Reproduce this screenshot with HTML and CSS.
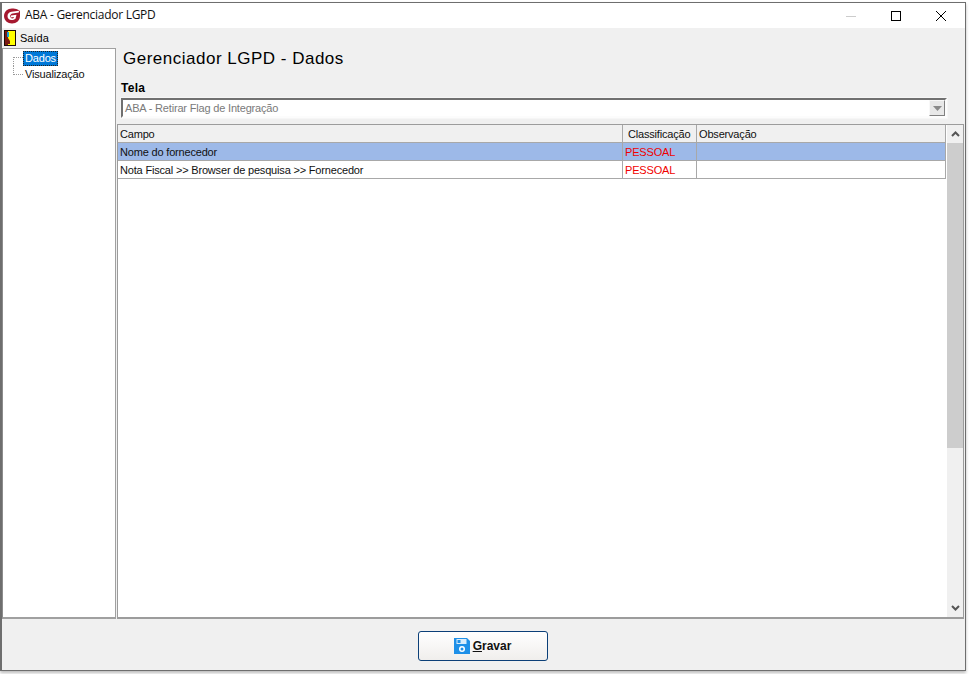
FILE: index.html
```html
<!DOCTYPE html>
<html lang="pt">
<head>
<meta charset="utf-8">
<title>ABA - Gerenciador LGPD</title>
<link rel="stylesheet" href="styles.css">
</head>
<body>
<div class="window">
  <header class="titlebar">
    <svg class="logo" width="16" height="16" viewBox="0 0 16 16"><path d="M8 .5C12 .5 16 2 16 3.500V8c0 4.500-3.500 7.500-8 7.500S0 12.500 0 8 3.500.5 8 .5z" fill="#a5182f"/><path d="M15 2.800L7.500 3.800C5 4.200 3.500 6 3.500 8.200c0 2.300 1.700 3.800 4 3.800 1.500 0 3-.5 4-1.300L12.500 6.800 7 7.600 6.600 9.400l3.300-.3-.3 1c-1.500.7-3.500.2-3.500-1.800 0-1.600 1.100-2.500 2.500-2.800L14.800 4.600z" fill="#fff"/></svg>
    <span class="title">ABA - Gerenciador LGPD</span>
    <div class="controls">
      <span class="ctl"><svg width="16" height="10" viewBox="0 0 16 10"><path d="M3 5.500h10" stroke="#ccc"/></svg></span>
      <span class="ctl"><svg width="16" height="10" viewBox="0 0 16 10"><rect x="3.500" y="0.500" width="9" height="9" fill="none" stroke="#000"/></svg></span>
      <span class="ctl"><svg width="16" height="10" viewBox="0 0 16 10"><path d="M3 0l10 10M13 0L3 10" stroke="#000"/></svg></span>
    </div>
  </header>
  <nav class="menubar">
    <svg width="12" height="16" viewBox="0 0 12 16"><rect width="12" height="16" fill="#1c0b08"/><rect x="1" y="1" width="3" height="14" fill="#7a1a12"/><rect x="4" y="1" width="7" height="14" fill="#ffff00"/><rect x="3" y="2" width="2" height="5" fill="#12a0d8"/><path d="M4 14V8l2 3v3z" fill="#7a1a12"/></svg>
    <span>Saída</span>
  </nav>
  <div class="body">
    <aside class="tree">
      <div class="node"><span class="branch first"></span><span class="selected">Dados</span></div>
      <div class="node"><span class="branch last"></span><span class="leaf">Visualização</span></div>
    </aside>
    <main class="main">
      <h1>Gerenciador LGPD - Dados</h1>
      <div class="field">
        <label>Tela</label>
        <div class="combo">
          <span>ABA - Retirar Flag de Integração</span>
          <span class="combo-btn"><svg width="9" height="5" viewBox="0 0 9 5"><path d="M0 0h9L4.500 5z" fill="#8a8a8a"/></svg></span>
        </div>
      </div>
      <div class="grid">
        <div class="table">
          <div class="row head"><div class="c1">Campo</div><div class="c2 center">Classificação</div><div class="c3">Observação</div></div>
          <div class="row sel"><div class="c1">Nome do fornecedor</div><div class="c2 red">PESSOAL</div><div class="c3"></div></div>
          <div class="row"><div class="c1">Nota Fiscal &gt;&gt; Browser de pesquisa &gt;&gt; Fornecedor</div><div class="c2 red">PESSOAL</div><div class="c3"></div></div>
        </div>
        <div class="scrollbar">
          <span class="arrow"><svg width="9" height="6" viewBox="0 0 9 6"><path d="M1 5l3.500-3.500L8 5" fill="none" stroke="#555" stroke-width="2"/></svg></span>
          <span class="thumb"></span>
          <span class="track"></span>
          <span class="arrow"><svg width="9" height="6" viewBox="0 0 9 6"><path d="M1 1l3.500 3.500L8 1" fill="none" stroke="#555" stroke-width="2"/></svg></span>
        </div>
      </div>
    </main>
  </div>
  <footer class="footer">
    <button class="save" type="button">
      <svg width="16" height="16" viewBox="0 0 16 16"><path d="M0 0h13l3 3v13H0z" fill="#1e90e8"/><rect x="2.500" y="1" width="10" height="5" fill="#d8ecfb"/><rect x="3.500" y="2" width="3" height="3" fill="#1e90e8"/><circle cx="8" cy="11" r="3" fill="#fff"/><circle cx="8" cy="11" r="1.500" fill="#1e90e8"/></svg>
      <span><u>G</u>ravar</span>
    </button>
  </footer>
</div>
</body>
</html>
```
FILE: styles.css
```css
* { box-sizing: border-box; }
html, body { margin: 0; padding: 0; }
body {
  width: 969px;
  height: 674px;
  overflow: hidden;
  background: #fff;
  font-family: "Liberation Sans", Arial, sans-serif;
  font-size: 11px;
  letter-spacing: -0.18px;
  color: #000;
}
.window {
  margin-top: 2px;
  width: 966px;
  height: 669px;
  display: flex;
  flex-direction: column;
  background: #f0f0f0;
  border: 1px solid #6e6e6e;
  border-left-width: 2px;
  box-shadow: 0 2px 3px #bbb;
}
.titlebar {
  height: 25px;
  flex: none;
  background: #fff;
  display: flex;
  align-items: center;
  padding-left: 2px;
}
.logo { margin-right: 5px; }
.title {
  font-family: "Open Sans", sans-serif;
  font-size: 12px;
  letter-spacing: -0.27px;
  color: #111;
  margin-top: -2px;
}
.controls { margin-left: auto; margin-right: 2px; display: flex; align-items: center; }
.ctl { width: 45px; height: 25px; display: flex; align-items: center; justify-content: center; }
.ctl svg { display: block; }
.menubar {
  height: 20px;
  flex: none;
  display: flex;
  align-items: center;
  gap: 4px;
  padding-left: 2px;
  font-size: 11px;
  letter-spacing: 0;
}
.body { flex: 1; display: flex; min-height: 0; gap: 1px; }
.tree {
  width: 114px;
  flex: none;
  background: #fff;
  border: 1px solid #a0a0a0;
  border-left-color: #8c8c8c;
  border-bottom-width: 2px;
  padding: 1px 0 0 10px;
  color: #111;
}
.node { height: 16px; display: flex; align-items: center; }
.branch {
  width: 10px;
  height: 9px;
  flex: none;
  border-left: 1px dotted #999;
}
.branch.first { border-top: 1px dotted #999; align-self: flex-end; }
.branch.last { border-bottom: 1px dotted #999; align-self: flex-start; }
.selected {
  background: #0078d7;
  color: #fff;
  outline: 1px dotted #222;
  outline-offset: -1px;
  padding: 0 2px;
  line-height: 15px;
  width: 35px;
}
.leaf { margin-left: 2px; }
.main { flex: 1; min-width: 0; display: flex; flex-direction: column; }
h1 {
  margin: 0;
  height: 31px;
  padding: 1px 0 0 6px;
  font-size: 17px;
  line-height: 20px;
  font-weight: 400;
  letter-spacing: 0.5px;
}
.field { padding-left: 4px; padding-right: 18px; }
label { display: block; font-weight: 700; font-size: 12px; height: 19px; line-height: 18px; letter-spacing: .3px; }
.combo {
  height: 20px;
  background: #fff;
  border: 2px solid;
  border-color: #707070 #fcfcfc #fcfcfc #707070;
  outline: 1px solid #f6f6f6;
  display: flex;
  align-items: center;
  color: #7a7a7a;
  padding-left: 2px;
}
.combo-btn {
  margin-left: auto;
  width: 16px;
  height: 16px;
  background: #e8e8e8;
  border: 1px solid;
  border-color: #f8f8f8 #808080 #808080 #f8f8f8;
  display: flex;
  align-items: center;
  justify-content: center;
}
.grid {
  margin-top: 6px;
  flex: 1;
  min-height: 0;
  display: flex;
  gap: 1px;
  background: #fff;
  border: 1px solid #9c9c9c;
  border-bottom-width: 2px;
  margin-right: 1px;
}
.table { flex: 1; }
.row {
  display: flex;
  height: 18px;
  line-height: 18px;
  border-bottom: 1px solid #a8a8a8;
  border-right: 1px solid #a8a8a8;
  background: #fff;
  color: #111;
}
.row.head { background: #f0f0f0; }
.row.sel { background: #9db9e8; }
.c1 { width: 505px; padding-left: 2px; border-right: 1px solid #a8a8a8; }
.c2 { width: 74px; padding-left: 2px; border-right: 1px solid #a8a8a8; }
.c3 { flex: 1; padding-left: 2px; }
.center { padding-left: 5px; }
.red { color: #f00000; }
.scrollbar {
  width: 16px;
  flex: none;
  display: flex;
  flex-direction: column;
  background: #f0f0f0;
}
.arrow { height: 18px; flex: none; display: flex; align-items: center; justify-content: center; }
.thumb { height: 305px; flex: none; background: #cdcdcd; }
.track { flex: 1; }
.footer {
  height: 51px;
  flex: none;
  display: flex;
  justify-content: center;
  align-items: flex-start;
  padding: 12px 2px 0 0;
}
.save {
  width: 130px;
  height: 30px;
  border: 1px solid #0b3f78;
  border-radius: 3px;
  background: linear-gradient(#ffffff, #f0eeec);
  display: flex;
  align-items: center;
  justify-content: center;
  gap: 3px;
  font-family: "Liberation Sans", Arial, sans-serif;
  font-size: 12px;
  font-weight: 700;
  letter-spacing: 0;
  color: #111;
  padding: 0;
}
```
